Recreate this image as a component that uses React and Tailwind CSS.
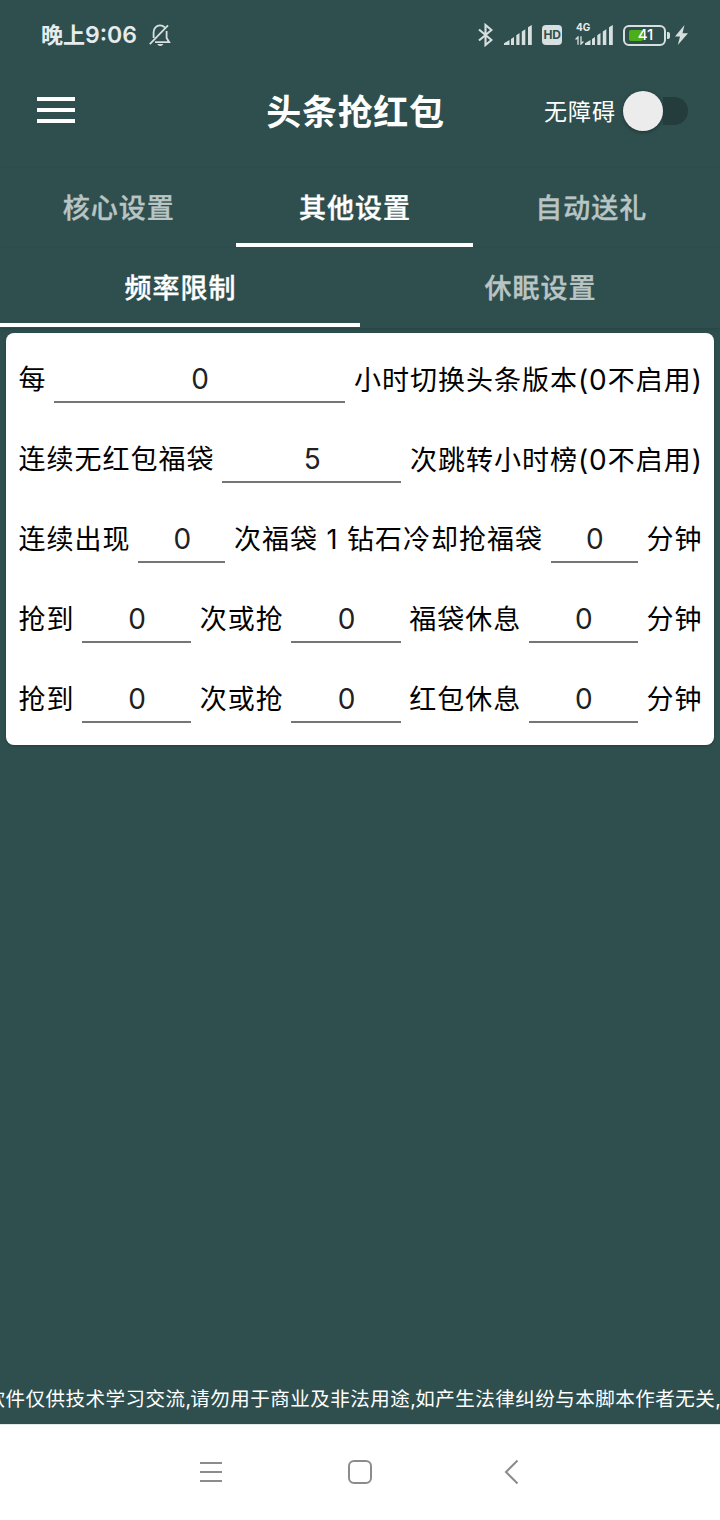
import { useState } from "react";

const FONT = "font-['Inter','Noto_Sans_CJK_SC',sans-serif]";

function Tabs({ items, active, onSelect, inset }) {
  return (
    <div
      className={`relative flex h-20 shrink-0 bg-[#2f4f4f] pb-px shadow-[0_1px_3px_rgba(0,0,0,0.18)] ${inset ? "pr-[11px]" : ""}`}
    >
      {items.map((label, i) => (
        <button
          key={label}
          onClick={() => onSelect(i)}
          className={`flex flex-1 items-center justify-center border-b-4 pt-[7px] pl-px text-[27px] leading-[40px] font-medium tracking-[1px] [-webkit-text-stroke:0.35px_currentColor] ${
            i === active ? "border-white text-white" : "border-transparent text-[#b9c5c4]"
          }`}
        >
          {label}
        </button>
      ))}
    </div>
  );
}

function Field({ value, label }) {
  return (
    <input
      aria-label={label}
      defaultValue={value}
      className="mx-2 -mt-0.5 h-[50px] min-w-0 flex-1 border-b-2 border-[#757575] bg-transparent pt-[4px] pl-px text-center text-[28px] tracking-normal text-[#212121] outline-none"
    />
  );
}

function Row({ parts }) {
  return (
    <div className="flex h-20 items-center text-[27px] leading-[40px] tracking-[1px] text-black">
      {parts.map((p, i) =>
        typeof p === "number" ? (
          <Field key={i} value={p} label={typeof parts[i - 1] === "string" ? parts[i - 1] : "数值"} />
        ) : (
          <span key={i} className="shrink-0 pt-0.5 pl-[0.5px] -mr-[0.5px] whitespace-pre">
            {p}
          </span>
        )
      )}
    </div>
  );
}

function Disabled() {
  return (
    <>
      <span className="text-[28px] tracking-[1px]">(0</span>不启用<span className="text-[28px] tracking-[0.5px]">)</span>
    </>
  );
}

function Signal() {
  return (
    <svg width="28" height="20" viewBox="0 0 28 20" fill="#d8e0df">
      <path d="M0 20v-1.800l5.500-3.200v5zM7 20v-6l3-2V20zM12.300 20V10.200l3.200-2.200V20zM17.800 20V6.500l3.500-2.300V20zM24 20V2.300L27.800 0v20z" />
    </svg>
  );
}

function StatusBar() {
  return (
    <div className="flex h-[70px] shrink-0 items-center pl-[41px] text-[#e6ecec]">
      <span className="text-[22px] leading-[32px] font-semibold">
        晚上<span className="text-[23px]">9:06</span>
      </span>
      <svg className="ml-3 shrink-0" width="22" height="22" viewBox="0 0 22 22" fill="none" stroke="#d8e0df" strokeWidth="1.8">
        <path d="M4.600 14V8.200C4.600 4.300 7.400 1.400 11 1.400c2 0 3.600.8 4.700 2M17.600 7v7l2.600 4.200H6M0.800 20.200 19 1.400" />
        <path d="M8.300 20h6c-.5 1.200-1.600 1.900-3 1.900s-2.500-.7-3-1.900z" fill="#d8e0df" stroke="none" />
      </svg>
      <div className="ml-auto flex items-center pr-8">
        <svg width="16" height="24" viewBox="0 0 16 24" fill="none" stroke="#d8e0df" strokeWidth="2.1">
          <path d="M2 6.500 14.500 17l-6 5V2l6 5L2 17.500" />
        </svg>
        <span className="ml-[11px]"><Signal /></span>
        <span className="ml-[10px] flex h-[20px] w-5 items-center justify-center rounded-[4px] bg-[#d8e0df] text-[12px] leading-none font-bold tracking-[-0.2px] text-[#2f4f4f]">
          HD
        </span>
        <span className="ml-[13px] flex w-[10px] flex-col pb-[3px]">
          <span className="w-4 pl-px text-[10px] leading-[10px] font-bold text-[#e6ecec]">4G</span>
          <svg className="mt-[4px]" width="10" height="9" viewBox="0 0 10 9" fill="none" stroke="#d8e0df" strokeWidth="1.300">
            <path d="M3 8.700V1L.6 3.500M6 .3V8l2.400-2.500" />
          </svg>
        </span>
        <Signal />
        <span className="ml-[10px] flex h-[21px] w-[43px] items-center rounded-[6px] border-[2.500px] border-[#d8e0df] p-[3.500px]">
          <span className="relative flex h-[11px] w-full items-center justify-center">
            <span className="absolute left-0 h-[11px] w-[14px] rounded-[2px] bg-[#4caf1a]" />
            <span className="relative -top-px left-[1px] text-[15px] leading-none font-medium text-white">41</span>
          </span>
        </span>
        <span className="ml-px h-[7px] w-[3px] rounded-r-[2px] bg-[#d8e0df]" />
        <svg className="ml-[5px]" width="13" height="20" viewBox="0 0 13 20" fill="#d8e0df">
          <path d="M9.500 0 0 11.500h5L2.800 20 13 8.200H7.500z" />
        </svg>
      </div>
    </div>
  );
}

function Header() {
  return (
    <header className="grid h-[98px] shrink-0 grid-cols-3 items-start pt-[15px]">
      <button aria-label="菜单" className="ml-[37px] flex h-[50px] w-[38px] flex-col justify-center gap-[7px]">
        <span className="h-1 bg-white" />
        <span className="h-1 bg-white" />
        <span className="h-1 bg-white" />
      </button>
      <h1 className="flex h-[52px] items-center justify-center pt-[3px] pr-[9px] text-[35px] leading-none font-bold tracking-[0.7px] whitespace-nowrap text-white">
        头条抢红包
      </h1>
      <div className="flex h-[52px] items-center justify-end pr-8">
        <span className="pt-[3px] text-[23px] leading-none tracking-[1px] text-white">无障碍</span>
        <span className="ml-[7px] flex h-10 w-[65px] items-center">
          <span className="size-10 rounded-full bg-[#ececec] shadow-[0_1px_4px_rgba(0,0,0,0.4)]" />
          <span className="h-7 flex-1 rounded-r-full bg-[#243c3c]" />
        </span>
      </div>
    </header>
  );
}

function Comma() {
  return <span className="tracking-[-0.8px]">,</span>;
}

export default function App() {
  const [main, setMain] = useState(1);
  const [sub, setSub] = useState(0);
  return (
    <div className={`flex h-[1520px] w-[720px] flex-col overflow-hidden bg-[#2f4f4f] ${FONT}`}>
      <StatusBar />
      <Header />
      <Tabs items={["核心设置", "其他设置", "自动送礼"]} active={main} onSelect={setMain} inset />
      <Tabs items={["频率限制", "休眠设置"]} active={sub} onSelect={setSub} />
      <main className="flex-1 px-1.5 pt-[5px]">
        <section className="rounded-[8px] bg-white px-3 py-1.5 shadow-[0_1px_3px_rgba(0,0,0,0.25)]">
          <Row parts={["每", 0, <>小时切换头条版本<Disabled /></>]} />
          <Row parts={["连续无红包福袋", 5, <>次跳转小时榜<Disabled /></>]} />
          <Row parts={["连续出现", 0, "次福袋 1 钻石冷却抢福袋", 0, "分钟"]} />
          <Row parts={["抢到", 0, "次或抢", 0, "福袋休息", 0, "分钟"]} />
          <Row parts={["抢到", 0, "次或抢", 0, "红包休息", 0, "分钟"]} />
        </section>
      </main>
      <div className="flex h-[50px] shrink-0 items-center overflow-hidden text-[19.500px] leading-[28px] tracking-[0.5px] whitespace-nowrap text-white">
        <span className="-ml-[14.5px]">
          软件仅供技术学习交流<Comma />请勿用于商业及非法用途<Comma />如产生法律纠纷与本脚本作者无关<Comma />
        </span>
      </div>
      <nav className="flex h-24 shrink-0 items-center border-t border-[#e3e8e8] bg-white pb-0.5 pl-[199px]">
        <svg width="24" height="24" viewBox="0 0 24 24" fill="none" stroke="#8c8c8c" strokeWidth="2">
          <path d="M1 3h22M1 12h22M1 21h22" />
        </svg>
        <svg className="ml-[124px]" width="26" height="26" viewBox="0 0 26 26" fill="none" stroke="#8c8c8c" strokeWidth="2">
          <rect x="2" y="2" width="22" height="22" rx="5" />
        </svg>
        <svg className="ml-[129px]" width="24" height="26" viewBox="0 0 24 26" fill="none" stroke="#8c8c8c" strokeWidth="2">
          <path d="M15.500 1.500 4 13l11.500 11.500" />
        </svg>
      </nav>
    </div>
  );
}
